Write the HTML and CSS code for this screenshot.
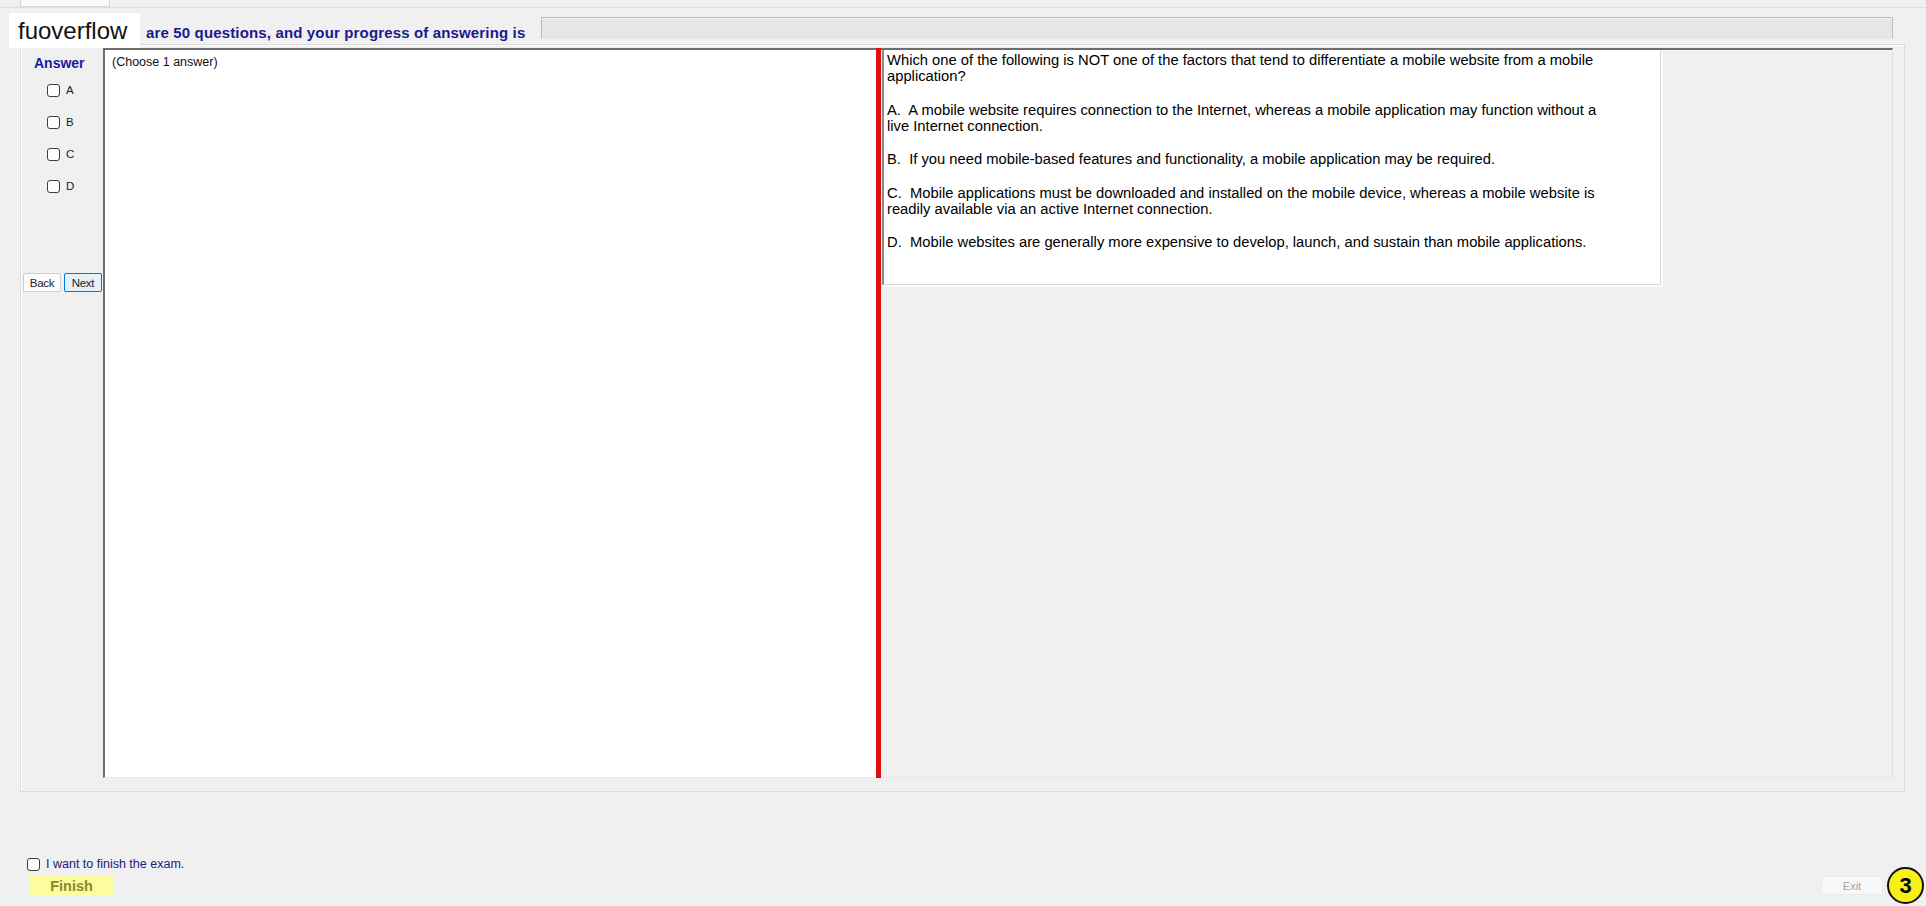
FILE: index.html
```html
<!DOCTYPE html>
<html lang="en">
<head>
  <meta charset="UTF-8">
  <title>Exam</title>
  <link rel="stylesheet" href="styles.css">
</head>
<body>

  <div class="tabs"><div class="tab"></div></div>

  <div class="header">
    <div class="brand">fuoverflow</div>
    <span class="progress-label">are 50 questions, and your progress of answering is</span>
    <div class="progress"></div>
  </div>

  <div class="main">
    <div class="sidebar">
      <div class="answer-title">Answer</div>
      <label class="option"><input type="checkbox"> A</label>
      <label class="option"><input type="checkbox"> B</label>
      <label class="option"><input type="checkbox"> C</label>
      <label class="option"><input type="checkbox"> D</label>
      <div class="nav">
        <button class="btn-back">Back</button>
        <button class="btn-next">Next</button>
      </div>
    </div>

    <div class="panes">
      <div class="answer-pane">(Choose 1 answer)</div>
      <div class="divider"></div>
      <div class="question-pane">
        <div class="question">
          <p>Which one of the following is NOT one of the factors that tend to differentiate a mobile website from a mobile application?</p>
          <p>A.&nbsp; A mobile website requires connection to the Internet, whereas a mobile application may function without a live Internet connection.</p>
          <p>B.&nbsp; If you need mobile-based features and functionality, a mobile application may be required.</p>
          <p>C.&nbsp; Mobile applications must be downloaded and installed on the mobile device, whereas a mobile website is readily available via an active Internet connection.</p>
          <p>D.&nbsp; Mobile websites are generally more expensive to develop, launch, and sustain than mobile applications.</p>
        </div>
      </div>
    </div>
  </div>

  <div class="footer">
    <label class="finish-check"><input type="checkbox"> I want to finish the exam.</label>
    <div class="footer-row">
      <button class="btn-finish">Finish</button>
      <button class="btn-exit">Exit</button>
    </div>
    <div class="badge">3</div>
  </div>

</body>
</html>
```

FILE: styles.css
```css
body {
  font-family: 'Liberation Sans', Arial, sans-serif;
  background-color: #f0f0f0;
  color: #000;
  margin: 0;
  padding: 0;
  width: 1926px;
  height: 906px;
  overflow: hidden;
  position: relative;
}

.tabs {
  height: 7px;
  border-bottom: 1px solid #dedede;
  padding-left: 20px;
}

.tab {
  width: 90px;
  height: 7px;
  background-color: #fafafa;
  border: 1px solid #d6d6d6;
  border-top: none;
  box-sizing: border-box;
}

.header {
  height: 36px;
  display: flex;
  align-items: flex-start;
  padding-left: 146px;
  padding-right: 33px;
}

.brand {
  position: absolute;
  left: 9px;
  top: 13px;
  width: 131px;
  height: 35px;
  line-height: 35px;
  padding-left: 9px;
  box-sizing: border-box;
  background-color: #fff;
  font-size: 24px;
  color: #111;
  z-index: 2;
}

.progress-label {
  margin-top: 16px;
  line-height: 18px;
  font-size: 15px;
  font-weight: bold;
  letter-spacing: 0.15px;
  color: #1a1a8e;
  white-space: nowrap;
}

.progress {
  flex: 1;
  margin-left: 16px;
  margin-top: 9px;
  height: 22px;
  background-color: #e6e6e6;
  border: 1px solid #bdbdbd;
  border-bottom-color: #e9e9e9;
  box-sizing: border-box;
  box-shadow: inset 0 1px 0 #f3f3f3;
}

.main {
  margin-left: 20px;
  width: 1885px;
  height: 748px;
  box-sizing: border-box;
  border: 1px solid #dcdcdc;
  box-shadow: inset 1px 1px 0 #fff;
  display: flex;
  padding: 3px 11px 13px 0;
}

.sidebar {
  width: 82px;
  padding-left: 2px;
  box-sizing: border-box;
}

.answer-title {
  margin-top: 6px;
  line-height: 18px;
  font-size: 14px;
  font-weight: bold;
  color: #1a1aa0;
  padding-left: 11px;
  margin-bottom: 2px;
}

.option {
  display: flex;
  align-items: center;
  height: 32px;
  padding-left: 24px;
  font-size: 11.5px;
  color: #222;
  gap: 6px;
}

input[type="checkbox"] {
  appearance: none;
  -webkit-appearance: none;
  width: 13px;
  height: 13px;
  margin: 0;
  border: 1px solid #3c3c3c;
  border-radius: 3px;
  background-color: #fff;
  flex: none;
}

.nav {
  margin-top: 71px;
  display: flex;
  gap: 3px;
}

.nav button {
  height: 19px;
  padding: 0;
  font-family: inherit;
  font-size: 11.5px;
  color: #222;
  letter-spacing: -0.3px;
  border-radius: 2px;
}

.btn-back {
  width: 38px;
  background-color: #fdfdfd;
  border: 1px solid #d0d0d0;
}

.btn-next {
  width: 38px;
  background-color: #e5f1fb;
  border: 1px solid #0078d7;
}

.panes {
  flex: 1;
  display: flex;
}

.answer-pane {
  width: 773px;
  box-sizing: border-box;
  background-color: #fff;
  border-top: 2px solid #6e6e6e;
  border-left: 2px solid #6e6e6e;
  border-bottom: 1px solid #e6e6e6;
  padding: 4px 7px;
  font-size: 12.5px;
  line-height: 16px;
  color: #111;
}

.divider {
  width: 5px;
  background-color: #e00d0d;
}

.question-pane {
  flex: 1;
  border-top: 2px solid #6e6e6e;
  border-right: 1px solid #dcdcdc;
  border-bottom: 1px solid #e6e6e6;
}

.question {
  width: 779px;
  height: 235px;
  box-sizing: border-box;
  margin-left: 1px;
  background-color: #fff;
  border-left: 2px solid #8a8a8a;
  border-right: 1px solid #d8d8d8;
  border-bottom: 1px solid #d8d8d8;
  box-shadow: 2px 2px 0 #fbfbfb;
  padding: 2px 51px 0 3px;
  font-size: 14.75px;
  line-height: 16px;
}

.question p {
  margin: 0 0 17.5px;
}

.footer {
  padding: 65px 43px 0 27px;
}

.finish-check {
  display: flex;
  align-items: center;
  gap: 6px;
  height: 14px;
  font-size: 12.5px;
  color: #1a1a80;
}

.footer-row {
  margin-top: 5px;
  display: flex;
  justify-content: space-between;
  align-items: flex-start;
}

.btn-finish {
  margin-left: 3px;
  width: 83px;
  height: 20px;
  padding: 0;
  border: none;
  background-color: #fdfda0;
  font-family: inherit;
  font-size: 14.5px;
  font-weight: bold;
  color: #8a8a1e;
}

.btn-exit {
  width: 62px;
  height: 19px;
  padding: 0;
  border: 1px solid #ececec;
  background-color: #f8f8f8;
  font-family: inherit;
  font-size: 11px;
  color: #a6a6a6;
}

.badge {
  position: absolute;
  left: 1887px;
  top: 867px;
  width: 37px;
  height: 37px;
  box-sizing: border-box;
  border: 2px solid #111;
  border-radius: 50%;
  background-color: #f7ef1a;
  font-size: 22px;
  font-weight: bold;
  line-height: 33px;
  text-align: center;
  color: #000;
}
```
